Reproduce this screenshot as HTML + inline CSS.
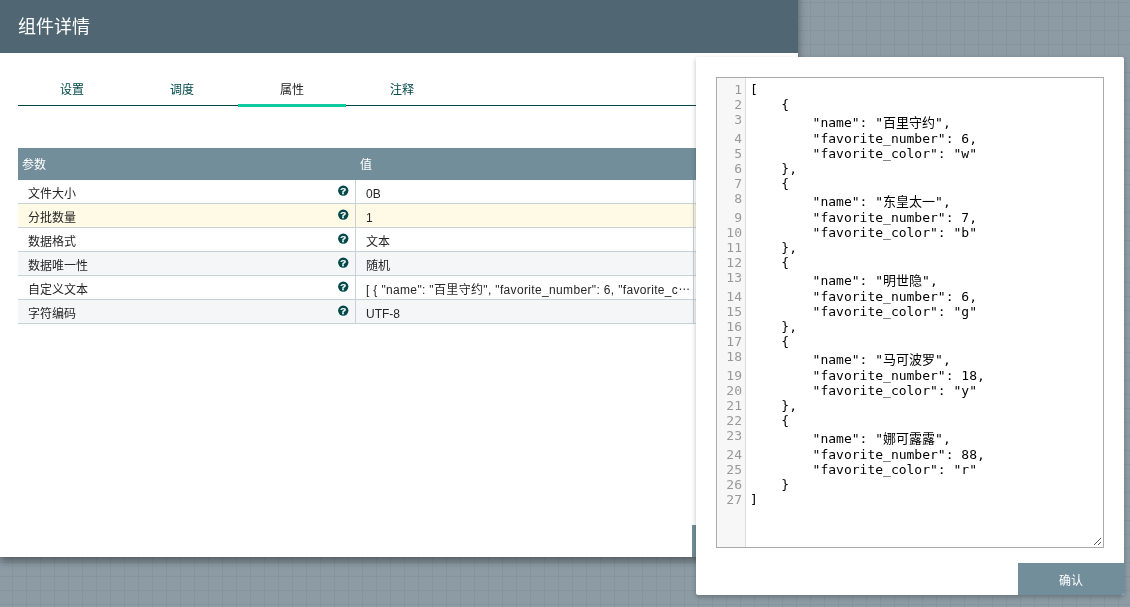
<!DOCTYPE html>
<html lang="zh-CN">
<head>
<meta charset="utf-8">
<title>组件详情</title>
<style>
*{box-sizing:border-box;margin:0;padding:0}
html,body{width:1130px;height:607px;overflow:hidden}
body{position:relative;background-color:#8c9ba4;font-family:"Liberation Sans","Noto Sans CJK SC",sans-serif;font-size:13px;color:#262626;
 background-image:linear-gradient(to right,#84959d 1px,transparent 1px),linear-gradient(to bottom,#84959d 1px,transparent 1px);
 background-size:14px 14px;background-position:12px 2px}
#dialog{will-change:transform;position:absolute;left:0;top:-40px;width:798px;height:597px;background:#fff;box-shadow:0 4px 8px rgba(0,0,0,.42)}
#dialog-header{position:absolute;left:0;top:40px;width:798px;height:53px;background:#506773;color:#fff;font-size:18px;line-height:55px;padding-left:18px;overflow:hidden}
#tabs{position:absolute;left:18px;top:112px;width:762px;height:34px;border-bottom:1px solid #004849}
.tab{position:absolute;top:0;width:108px;height:35px;line-height:36px;text-align:center;color:#004849;font-size:12px}
.tab.sel{color:#262626;border-bottom:3px solid #11caa0}
#grid{position:absolute;left:18px;top:188px;width:762px;font-size:12px}
#ghead{height:32px;background:#728e9b;color:#fff;line-height:34px;position:relative;overflow:hidden}
#ghead span{position:absolute;top:0}
.row{position:relative;height:24px;border-bottom:1px solid #c7d2d7;line-height:28px;background:#fff;overflow:hidden}
.row.odd{background:#f4f6f7}
.row.hl{background:#fffae6}
.c1{position:absolute;left:0;top:0;width:338px;height:23px;border-right:1px solid #c7d2d7;padding-left:10px}
.c2{position:absolute;left:338px;top:0;width:338px;height:23px;border-right:1px solid #c7d2d7;padding-left:10px;white-space:nowrap;overflow:hidden}
.js{letter-spacing:.345px}
.el{position:relative;top:-4px;letter-spacing:.55px;line-height:0}
.q{position:absolute;left:318px;top:3px;width:16px;height:16px;overflow:visible}
.q text{font-family:"Liberation Sans",sans-serif;font-weight:bold;font-size:9.7px;fill:#fff;stroke:#fff;stroke-width:.25px;text-anchor:middle}
#apply{position:absolute;left:692px;top:565px;width:88px;height:32px;background:#728e9b}
#popup{will-change:transform;position:absolute;left:696px;top:57px;width:428px;height:538px;background:#fff;border-radius:2px;box-shadow:0 2px 5px rgba(0,0,0,.25)}
#editor{position:absolute;left:20px;top:20px;width:388px;height:471px;border:1px solid #aaa;background:#fff;overflow:hidden}
#gutter{position:absolute;left:0;top:0;width:29px;height:100%;background:#f7f7f7;border-right:1px solid #ddd}
#ok{position:absolute;left:322px;top:506px;width:106px;height:32px;background:#728e9b;color:#fff;text-align:center;line-height:36px;font-size:12px;border-radius:0 0 2px 0;overflow:hidden}
.ln{position:absolute;left:0;width:25px;text-align:right;color:#999;font-family:"DejaVu Sans Mono","Liberation Mono","Noto Sans CJK SC",monospace;font-size:13px;line-height:15px;height:15px}
.cl{position:absolute;left:33px;white-space:pre;color:#000;font-family:"DejaVu Sans Mono","Liberation Mono","Noto Sans CJK SC",monospace;font-size:13px;line-height:15px;height:15px}
.cl.t{line-height:21px;height:19px}
#grip{position:absolute;left:377px;top:460px;width:7px;height:7px}
</style>
</head>
<body>
<div id="dialog">
 <div id="dialog-header">组件详情</div>
 <div id="tabs">
  <div class="tab" style="left:0">设置</div>
  <div class="tab" style="left:110px">调度</div>
  <div class="tab sel" style="left:220px">属性</div>
  <div class="tab" style="left:330px">注释</div>
 </div>
 <div id="grid">
  <div id="ghead"><span style="left:4px">参数</span><span style="left:342px">值</span></div>
  <div class="row"><div class="c1">文件大小<svg class="q" viewBox="0 0 16 16"><circle cx="7.25" cy="7.6" r="5.15" fill="#004849"/><text x="7.3" y="11">?</text></svg></div><div class="c2">0B</div></div>
  <div class="row hl"><div class="c1">分批数量<svg class="q" viewBox="0 0 16 16"><circle cx="7.25" cy="7.6" r="5.15" fill="#004849"/><text x="7.3" y="11">?</text></svg></div><div class="c2">1</div></div>
  <div class="row"><div class="c1">数据格式<svg class="q" viewBox="0 0 16 16"><circle cx="7.25" cy="7.6" r="5.15" fill="#004849"/><text x="7.3" y="11">?</text></svg></div><div class="c2">文本</div></div>
  <div class="row odd"><div class="c1">数据唯一性<svg class="q" viewBox="0 0 16 16"><circle cx="7.25" cy="7.6" r="5.15" fill="#004849"/><text x="7.3" y="11">?</text></svg></div><div class="c2">随机</div></div>
  <div class="row"><div class="c1">自定义文本<svg class="q" viewBox="0 0 16 16"><circle cx="7.25" cy="7.6" r="5.15" fill="#004849"/><text x="7.3" y="11">?</text></svg></div><div class="c2 js">[ { "name": "百里守约", "favorite_number": 6, "favorite_c<span class="el">…</span></div></div>
  <div class="row odd"><div class="c1">字符编码<svg class="q" viewBox="0 0 16 16"><circle cx="7.25" cy="7.6" r="5.15" fill="#004849"/><text x="7.3" y="11">?</text></svg></div><div class="c2">UTF-8</div></div>
 </div>
 <div id="apply"></div>
</div>
<div id="popup">
 <div id="editor"><div id="gutter"></div><svg id="grip" viewBox="0 0 7 7" shape-rendering="crispEdges" fill="#555"><rect x="0" y="6" width="1" height="1"/><rect x="1" y="5" width="1" height="1"/><rect x="2" y="4" width="1" height="1"/><rect x="3" y="3" width="1" height="1"/><rect x="4" y="2" width="1" height="1"/><rect x="5" y="1" width="1" height="1"/><rect x="6" y="0" width="1" height="1"/><rect x="4" y="6" width="1" height="1"/><rect x="5" y="5" width="1" height="1"/><rect x="6" y="4" width="1" height="1"/></svg>
<div class="ln" style="top:4px">1</div><div class="cl" style="top:4px">[</div>
<div class="ln" style="top:19px">2</div><div class="cl" style="top:19px">    {</div>
<div class="ln" style="top:34px">3</div><div class="cl t" style="top:34px">        "name": "百里守约",</div>
<div class="ln" style="top:53px">4</div><div class="cl" style="top:53px">        "favorite_number": 6,</div>
<div class="ln" style="top:68px">5</div><div class="cl" style="top:68px">        "favorite_color": "w"</div>
<div class="ln" style="top:83px">6</div><div class="cl" style="top:83px">    },</div>
<div class="ln" style="top:98px">7</div><div class="cl" style="top:98px">    {</div>
<div class="ln" style="top:113px">8</div><div class="cl t" style="top:113px">        "name": "东皇太一",</div>
<div class="ln" style="top:132px">9</div><div class="cl" style="top:132px">        "favorite_number": 7,</div>
<div class="ln" style="top:147px">10</div><div class="cl" style="top:147px">        "favorite_color": "b"</div>
<div class="ln" style="top:162px">11</div><div class="cl" style="top:162px">    },</div>
<div class="ln" style="top:177px">12</div><div class="cl" style="top:177px">    {</div>
<div class="ln" style="top:192px">13</div><div class="cl t" style="top:192px">        "name": "明世隐",</div>
<div class="ln" style="top:211px">14</div><div class="cl" style="top:211px">        "favorite_number": 6,</div>
<div class="ln" style="top:226px">15</div><div class="cl" style="top:226px">        "favorite_color": "g"</div>
<div class="ln" style="top:241px">16</div><div class="cl" style="top:241px">    },</div>
<div class="ln" style="top:256px">17</div><div class="cl" style="top:256px">    {</div>
<div class="ln" style="top:271px">18</div><div class="cl t" style="top:271px">        "name": "马可波罗",</div>
<div class="ln" style="top:290px">19</div><div class="cl" style="top:290px">        "favorite_number": 18,</div>
<div class="ln" style="top:305px">20</div><div class="cl" style="top:305px">        "favorite_color": "y"</div>
<div class="ln" style="top:320px">21</div><div class="cl" style="top:320px">    },</div>
<div class="ln" style="top:335px">22</div><div class="cl" style="top:335px">    {</div>
<div class="ln" style="top:350px">23</div><div class="cl t" style="top:350px">        "name": "娜可露露",</div>
<div class="ln" style="top:369px">24</div><div class="cl" style="top:369px">        "favorite_number": 88,</div>
<div class="ln" style="top:384px">25</div><div class="cl" style="top:384px">        "favorite_color": "r"</div>
<div class="ln" style="top:399px">26</div><div class="cl" style="top:399px">    }</div>
<div class="ln" style="top:414px">27</div><div class="cl" style="top:414px">]</div>
 </div>
 <div id="ok">确认</div>
</div>
</body>
</html>
